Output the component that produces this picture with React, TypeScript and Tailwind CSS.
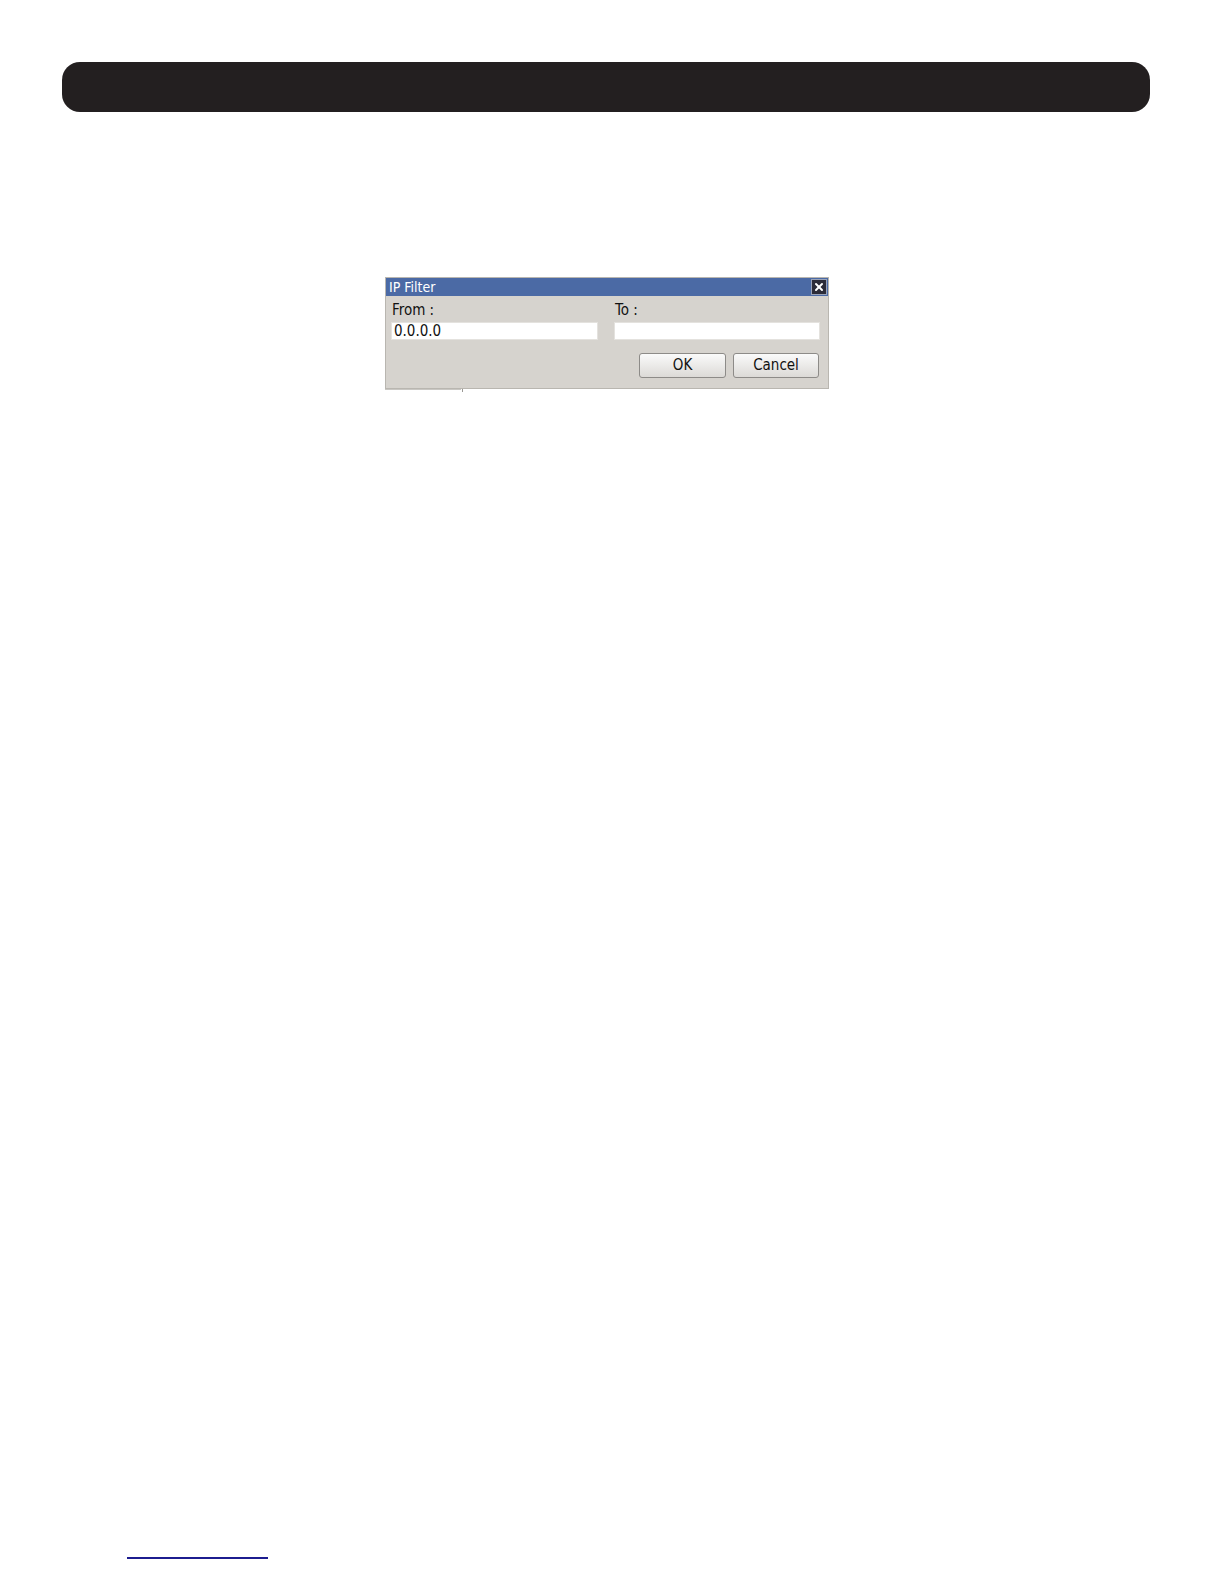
import { X } from "lucide-react";

function IpFilterDialog() {
  return (
    <div className="ml-[385px] mt-[165px] w-[444px] bg-[#d6d3ce] border border-[#b9b6b0] font-['DejaVu_Sans_Condensed','DejaVu_Sans',sans-serif]">
      <div className="h-[18px] bg-[#4b6aa5] flex items-center justify-between pl-[3px] pr-[1px]">
        <span className="text-[14px] leading-none text-white">IP Filter</span>
        <span className="w-[16px] h-[16px] bg-[#2c2c38] border border-[#9aa3b8] flex items-center justify-center">
          <X className="w-[12px] h-[12px] text-white" strokeWidth={4} />
        </span>
      </div>
      <div className="pl-[5px] pr-[9px] pt-[5px] pb-[10px]">
        <div className="grid grid-cols-[207px_206px] gap-x-[16px]">
          <div>
            <div className="text-[15px] leading-[19px] text-[#111] pl-[1px]">From :</div>
            <div className="mt-[2px] h-[18px] bg-white border border-[#e4e2de] text-[15px] leading-[16px] text-[#111] pl-[2px]">
              0.0.0.0
            </div>
          </div>
          <div>
            <div className="text-[15px] leading-[19px] text-[#111] pl-[1px]">To :</div>
            <div className="mt-[2px] h-[18px] bg-white border border-[#e4e2de]" />
          </div>
        </div>
        <div className="mt-[13px] flex justify-end gap-[7px]">
          <button className="w-[87px] h-[25px] rounded-[3px] border border-[#8d8b88] bg-gradient-to-b from-[#fafafa] to-[#dcdad7] text-[15px] leading-none text-[#111]">
            OK
          </button>
          <button className="w-[86px] h-[25px] rounded-[3px] border border-[#8d8b88] bg-gradient-to-b from-[#fafafa] to-[#dcdad7] text-[15px] leading-none text-[#111]">
            Cancel
          </button>
        </div>
      </div>
    </div>
  );
}

export default function App() {
  return (
    <div className="w-[1224px] h-[1584px] bg-white flex flex-col overflow-hidden">
      <div className="ml-[62px] mt-[62px] w-[1088px] h-[50px] rounded-[18px] bg-[#231f20]" />
      <IpFilterDialog />
      <div className="ml-[385px] flex items-start">
        <div className="w-[76px] h-[1px] bg-[#c9c7c3]" />
        <div className="ml-[1px] w-[1px] h-[3px] bg-[#9a9894]" />
      </div>
      <div className="ml-[127px] mt-auto mb-[25px] w-[141px] h-[2px] bg-[#1c1c8f]" />
    </div>
  );
}
